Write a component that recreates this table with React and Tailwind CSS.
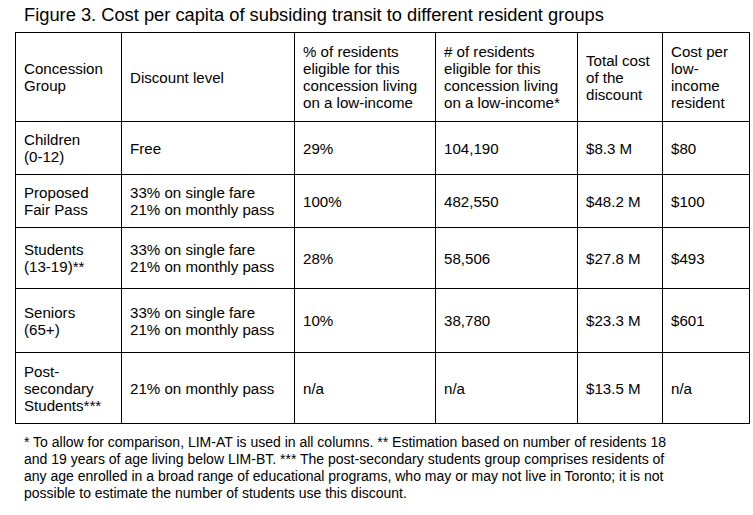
const rows = [
  { group: ["Children", "(0-12)"], discount: ["Free"], pct: "29%", count: "104,190", total: "$8.3 M", per: "$80", h: "h-[53px]" },
  { group: ["Proposed", "Fair Pass"], discount: ["33% on single fare", "21% on monthly pass"], pct: "100%", count: "482,550", total: "$48.2 M", per: "$100", h: "h-[53px]" },
  { group: ["Students", "(13-19)**"], discount: ["33% on single fare", "21% on monthly pass"], pct: "28%", count: "58,506", total: "$27.8 M", per: "$493", h: "h-[61px]" },
  { group: ["Seniors", "(65+)"], discount: ["33% on single fare", "21% on monthly pass"], pct: "10%", count: "38,780", total: "$23.3 M", per: "$601", h: "h-[64px]" },
  { group: ["Post-", "secondary", "Students***"], discount: ["21% on monthly pass"], pct: "n/a", count: "n/a", total: "$13.5 M", per: "n/a", h: "h-[71px]" },
];

function Lines({ items }) {
  return items.map((t, i) => <div key={i}>{t}</div>);
}

const cell = "border border-black px-2 align-middle";

export default function App() {
  return (
    <div className="bg-white w-[753px] h-[515px] text-black font-['Liberation_Sans',Arial,sans-serif] pt-[5px]">
      <h1 className="pl-6 text-[18.3px] leading-5 font-normal">
        Figure 3. Cost per capita of subsiding transit to different resident groups
      </h1>

      <table className="ml-[15px] mt-[7px] w-[734px] table-fixed border-collapse text-[15.1px] leading-[17px]">
        <colgroup>
          <col className="w-[106px]" />
          <col className="w-[173px]" />
          <col className="w-[141px]" />
          <col className="w-[142px]" />
          <col className="w-[85px]" />
          <col className="w-[87px]" />
        </colgroup>
        <thead>
          <tr className="h-[89px] text-left">
            <th className={`${cell} font-normal`}><Lines items={["Concession", "Group"]} /></th>
            <th className={`${cell} font-normal`}>Discount level</th>
            <th className={`${cell} font-normal`}>
              <Lines items={["% of residents", "eligible for this", "concession living", "on a low-income"]} />
            </th>
            <th className={`${cell} font-normal`}>
              <Lines items={["# of residents", "eligible for this", "concession living", "on a low-income*"]} />
            </th>
            <th className={`${cell} font-normal`}>
              <Lines items={["Total cost", "of the", "discount"]} />
            </th>
            <th className={`${cell} font-normal`}>
              <Lines items={["Cost per", "low-", "income", "resident"]} />
            </th>
          </tr>
        </thead>
        <tbody>
          {rows.map((r) => (
            <tr key={r.group.join(" ")} className={r.h}>
              <td className={cell}><Lines items={r.group} /></td>
              <td className={cell}><Lines items={r.discount} /></td>
              <td className={cell}>{r.pct}</td>
              <td className={cell}>{r.count}</td>
              <td className={cell}>{r.total}</td>
              <td className={cell}>{r.per}</td>
            </tr>
          ))}
        </tbody>
      </table>

      <p className="pl-6 pr-4 mt-[10px] text-[14px] leading-[17px]">
        * To allow for comparison, LIM-AT is used in all columns. ** Estimation based on number of residents 18
        <br />
        and 19 years of age living below LIM-BT. *** The post-secondary students group comprises residents of
        <br />
        any age enrolled in a broad range of educational programs, who may or may not live in Toronto; it is not
        <br />
        possible to estimate the number of students use this discount.
      </p>
    </div>
  );
}
